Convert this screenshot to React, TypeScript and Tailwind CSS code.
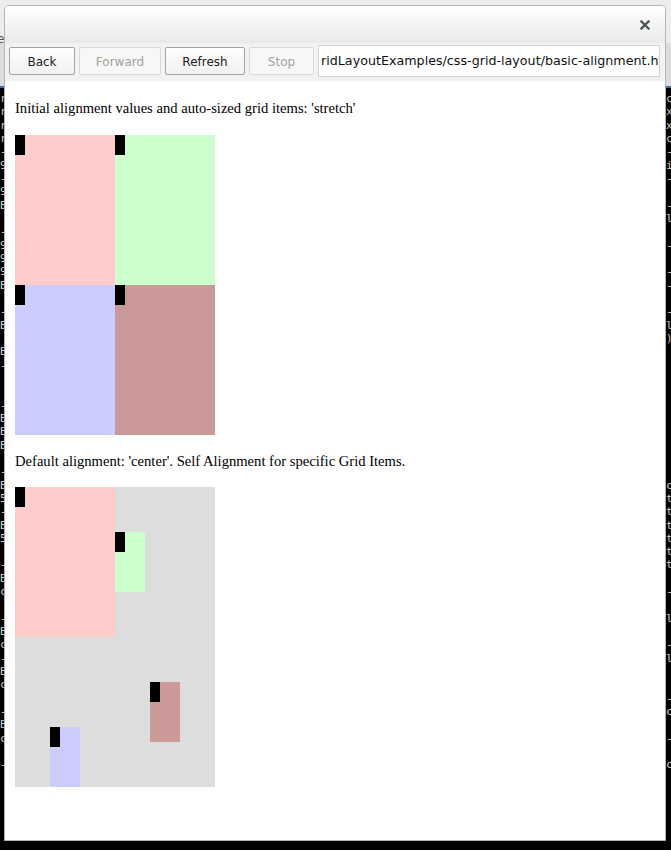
import React from "react";

const rightChars: string[] = [
  "c","x","x","c","-","i","-","","-","l","","-","","-","-","","-","l",")","","","","","","","","","","","c","t","t","t","t","t","t","","-","","l","","-","l","","","-","c","","-","","c",
];
const leftChars: string[] = [
  "r","r","r","r","-","9","-","9","B","","-","9","9","9","B","","-","B","","B","-","","","-","B","B","B","","-","B","5","-","B","5","","-","B","c","","-","B","c","-","B","c","","-","B","c","","-",
];

function Marker() {
  return <div className="w-[10px] h-[20px] bg-black" />;
}

function Btn({ label, w, disabled }: { label: string; w: string; disabled?: boolean }) {
  return (
    <div
      className={
        "mt-[2px] h-[28px] pt-[1px] flex items-center justify-center rounded-[2px] border text-[12px] " +
        w +
        (disabled
          ? " border-[#dadada] bg-[#f7f7f7] text-[#a3a39a]"
          : " border-[#a3a3a3] bg-gradient-to-b from-[#fdfdfd] to-[#f1f1f1] text-[#222]")
      }
      style={{ fontFamily: '"DejaVu Sans", sans-serif' }}
    >
      {label}
    </div>
  );
}

export default function App() {
  return (
    <div className="relative w-[671px] h-[850px] bg-black overflow-hidden">
      {/* desktop top area */}
      <div className="absolute left-0 top-0 w-[671px] h-[88px] flex flex-col">
        <div className="h-[43px] bg-[#ededed] relative">
          <span
            className="absolute left-[-3px] top-[30px] text-[12px] text-[#555]"
            style={{ fontFamily: '"DejaVu Sans", sans-serif' }}
          >
            e
          </span>
        </div>
        <div className="h-[43px] bg-[#dcdcdc]" />
        <div className="h-[2px] bg-[#3a6db5]" />
      </div>
      {/* terminal text columns */}
      <div
        className="absolute left-[0px] top-[92px] flex flex-col text-[11px] leading-[13.33px] text-[#cfcfcf]"
        style={{ fontFamily: '"DejaVu Sans Mono", monospace' }}
      >
        {leftChars.map((c, i) => (
          <div key={i} className="h-[13.33px]">{c || "\u00a0"}</div>
        ))}
      </div>
      <div
        className="absolute left-[666px] top-[92px] flex flex-col text-[11px] leading-[13.33px] text-[#cfcfcf]"
        style={{ fontFamily: '"DejaVu Sans Mono", monospace' }}
      >
        {rightChars.map((c, i) => (
          <div key={i} className="h-[13.33px]">{c || "\u00a0"}</div>
        ))}
      </div>

      {/* window */}
      <div className="absolute left-[4px] top-[5px] w-[662px] h-[836px] border border-[#b5b5b5] rounded-t-[5px] bg-white flex flex-col overflow-hidden">
        <div className="h-[37px] shrink-0 bg-gradient-to-b from-[#ffffff] to-[#e9e9e9] flex items-center justify-end pr-[15px]">
          <svg width="10" height="10" viewBox="0 0 10 10">
            <path d="M1.5 1.5 L8.5 8.5 M8.5 1.5 L1.5 8.5" stroke="#4e575c" strokeWidth="2.4" strokeLinecap="square" />
          </svg>
        </div>
        <div className="h-[38px] shrink-0 bg-[#f2f2f2] flex items-start pt-[2px] pl-[4px] gap-[4px]">
          <Btn label="Back" w="w-[66px]" />
          <Btn label="Forward" w="w-[82px]" disabled />
          <Btn label="Refresh" w="w-[80px]" />
          <Btn label="Stop" w="w-[65px]" disabled />
          <div
            className="h-[32px] w-[342px] border border-[#d3d3d3] bg-white flex items-center pl-[2px] overflow-hidden whitespace-nowrap text-[12.7px] text-[#111]"
            style={{ fontFamily: '"DejaVu Sans", sans-serif' }}
          >
            ridLayoutExamples/css-grid-layout/basic-alignment.html
          </div>
        </div>
        <div
          className="flex-1 bg-white pl-[10px] flex flex-col text-[14.6px] text-black"
          style={{ fontFamily: '"Liberation Serif", serif' }}
        >
          <p className="mt-[18px] h-[18px] leading-[18px] whitespace-nowrap">
            Initial alignment values and auto-sized grid items: 'stretch'
          </p>
          <div className="mt-[18px] grid grid-cols-[100px_100px] grid-rows-[150px_150px] w-[200px] h-[300px]">
            <div className="bg-[#ffcccc]"><Marker /></div>
            <div className="bg-[#ccffcc]"><Marker /></div>
            <div className="bg-[#ccccff]"><Marker /></div>
            <div className="bg-[#cc9999]"><Marker /></div>
          </div>
          <p className="mt-[17px] h-[18px] leading-[18px] whitespace-nowrap">
            Default alignment: 'center'. Self Alignment for specific Grid Items.
          </p>
          <div className="mt-[17px] grid grid-cols-[100px_100px] grid-rows-[150px_150px] w-[200px] h-[300px] bg-[#dddddd] items-center justify-items-center">
            <div className="bg-[#ffcccc] self-stretch justify-self-stretch"><Marker /></div>
            <div className="bg-[#ccffcc] w-[30px] h-[60px] justify-self-start"><Marker /></div>
            <div className="bg-[#ccccff] w-[30px] h-[60px] self-end"><Marker /></div>
            <div className="bg-[#cc9999] w-[30px] h-[60px]"><Marker /></div>
          </div>
        </div>
      </div>
    </div>
  );
}
